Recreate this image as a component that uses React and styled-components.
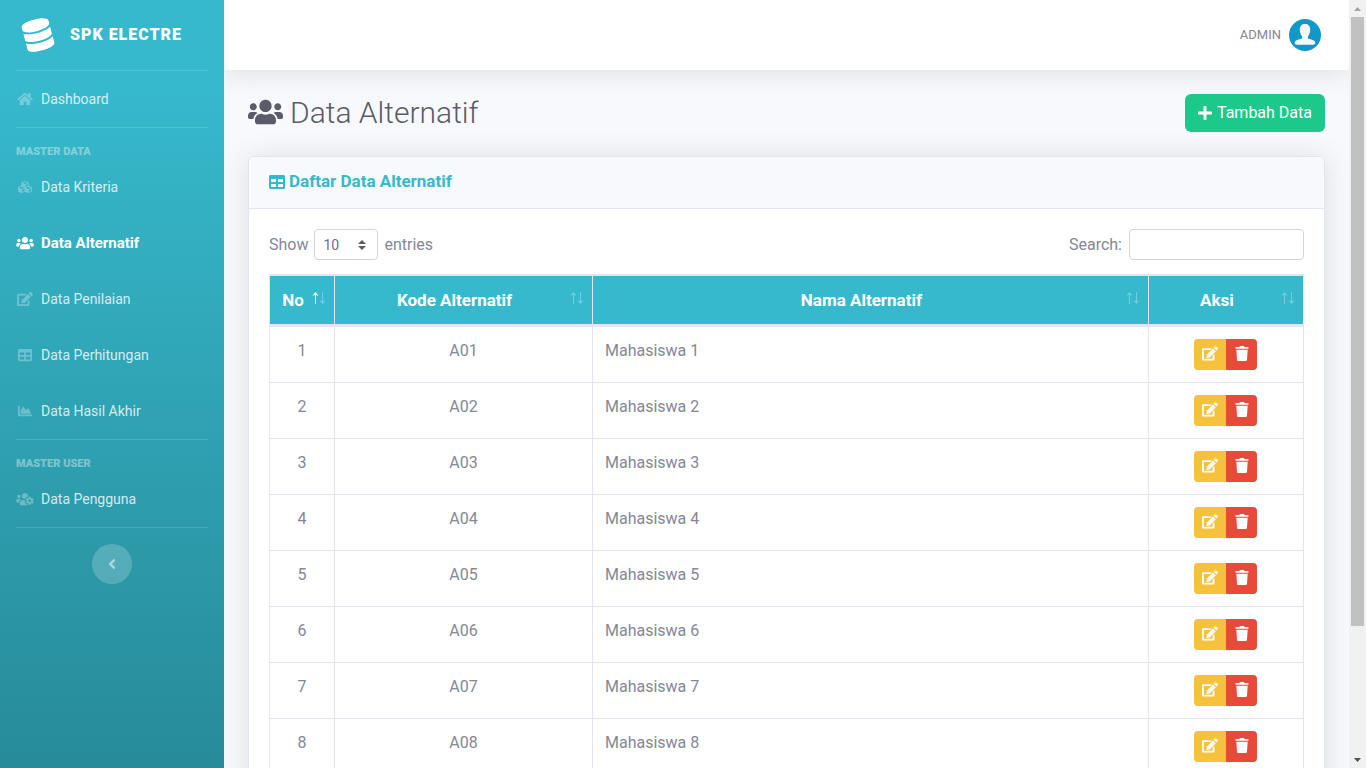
import React from "react";
import styled, { createGlobalStyle, css } from "styled-components";
import {
  FaHome,
  FaCubes,
  FaUsers,
  FaEdit,
  FaTable,
  FaChartArea,
  FaUsersCog,
  FaDatabase,
  FaPlus,
  FaTrash,
  FaAngleLeft,
} from "react-icons/fa";

const GlobalStyle = createGlobalStyle`
  *, *::before, *::after { box-sizing: border-box; }
  body {
    margin: 0;
    background: #f8f9fc;
    color: #858796;
    font-family: Roboto, "Liberation Sans", sans-serif;
    font-size: 16px;
    line-height: 24px;
  }
  button, input, select { font: inherit; }
  h1, h2, ul { margin: 0; padding: 0; }
  svg { display: block; flex: none; }
`;

const Window = styled.div`
  display: flex;
  height: 100vh;
`;

const Scroller = styled.div`
  flex: 1;
  min-width: 0;
  overflow-y: auto;
  scrollbar-width: none;
`;

const Page = styled.div`
  display: flex;
  min-height: 100%;
`;

/* Sidebar */

const Sidebar = styled.nav`
  position: relative;
  z-index: 1;
  flex: none;
  width: 224px;
  background: linear-gradient(180deg, #36b9cc 10%, #258391 100%);
  color: #fff;
`;

const Brand = styled.a`
  display: flex;
  align-items: center;
  gap: 18px;
  height: 70px;
  padding: 0 24px;
  color: #fff;
  font-size: 16px;
  font-weight: 900;
  letter-spacing: 1px;
  text-decoration: none;
  text-transform: uppercase;

  svg {
    width: 28px;
    height: 32px;
    transform: rotate(-15deg);
  }
`;

const Divider = styled.hr`
  height: 1px;
  margin: 0 16px ${(p) => (p.$spaced ? "16px" : "0")};
  border: 0;
  background: rgba(255, 255, 255, 0.15);
`;

const GroupTitle = styled.div`
  padding: 0 16px;
  color: rgba(255, 255, 255, 0.4);
  font-size: 11px;
  font-weight: 900;
  line-height: 15px;
  text-transform: uppercase;
`;

const NavList = styled.ul`
  list-style: none;
`;

const NavLink = styled.a`
  display: flex;
  align-items: center;
  gap: 7px;
  height: 56px;
  padding: 0 16px;
  color: ${(p) => (p.$active ? "#fff" : "rgba(255, 255, 255, 0.8)")};
  font-size: ${(p) => (p.$active ? "15px" : "14px")};
  font-weight: ${(p) => (p.$active ? 700 : 400)};
  text-decoration: none;

  svg {
    width: 18px;
    height: 14px;
    color: ${(p) => (p.$active ? "#fff" : "rgba(255, 255, 255, 0.3)")};
  }
`;

const Collapse = styled.button`
  display: grid;
  place-items: center;
  width: 40px;
  height: 40px;
  margin: 0 auto;
  padding: 0;
  border: 0;
  border-radius: 50%;
  background: rgba(255, 255, 255, 0.2);
  color: rgba(255, 255, 255, 0.5);
  cursor: pointer;
`;

/* Main column */

const Content = styled.div`
  flex: 1;
  min-width: 0;
`;

const Topbar = styled.header`
  display: flex;
  align-items: center;
  justify-content: flex-end;
  height: 70px;
  padding: 0 28px;
  background: #fff;
  box-shadow: 0 2px 28px 0 rgba(58, 59, 69, 0.15);
`;

const UserLink = styled.a`
  display: flex;
  align-items: center;
  gap: 8px;
  color: #858796;
  font-size: 13px;
  text-decoration: none;
  text-transform: uppercase;
`;

const Main = styled.main`
  padding: 24px 24px 80px;
`;

const TitleRow = styled.div`
  display: flex;
  align-items: center;
  justify-content: space-between;
  margin-bottom: 24px;
`;

const PageTitle = styled.h1`
  display: flex;
  align-items: center;
  gap: 7px;
  color: #5a5c69;
  font-size: 30px;
  font-weight: 300;
  line-height: 34px;

  svg {
    width: 35px;
    height: 28px;
    margin-bottom: 2px;
  }
`;

const AddButton = styled.button`
  display: flex;
  align-items: center;
  gap: 5px;
  height: 38px;
  padding: 0 13px;
  border: 0;
  border-radius: 6px;
  background: #1cc88a;
  color: #fff;
  cursor: pointer;

  svg {
    width: 14px;
    height: 16px;
  }
`;

const Card = styled.section`
  border: 1px solid #e3e6f0;
  border-radius: 6px;
  background: #fff;
  box-shadow: 0 2px 28px 0 rgba(58, 59, 69, 0.15);
`;

const CardHeader = styled.header`
  padding: 15px 20px 17px;
  border-bottom: 1px solid #e3e6f0;
  border-radius: 5px 5px 0 0;
  background: #f8f9fc;
`;

const CardTitle = styled.h2`
  display: flex;
  align-items: center;
  gap: 4px;
  color: #36b9cc;
  font-size: 17px;
  font-weight: 700;
  line-height: 19px;

  svg {
    width: 16px;
    height: 16px;
  }
`;

const CardBody = styled.div`
  padding: 20px;
`;

const Controls = styled.div`
  display: flex;
  justify-content: space-between;
  margin-bottom: 14px;
`;

const ControlLabel = styled.label`
  display: flex;
  align-items: center;
  gap: ${(p) => p.$gap};
`;

const field = css`
  height: 31px;
  border: 1px solid #d1d3e2;
  border-radius: 4px;
  background: #fff;
  color: #6e707e;
  font-size: 14px;
`;

const SelectBox = styled.span`
  position: relative;

  svg {
    position: absolute;
    top: 11px;
    right: 12px;
    pointer-events: none;
  }
`;

const LengthSelect = styled.select`
  ${field}
  display: block;
  width: 64px;
  padding: 0 8px;
  appearance: none;
`;

const SearchInput = styled.input`
  ${field}
  width: 175px;
  padding: 4px 8px;
`;

/* Table */

const DataTable = styled.table`
  width: 100%;
  border: 1px solid #e3e6f0;
  border-right: 0;
  border-collapse: separate;
  border-spacing: 0;
  table-layout: fixed;
`;

const Column = styled.col`
  width: ${(p) => p.$width};
`;

const HeadCell = styled.th`
  padding: 0;
  border: solid #e3e6f0;
  border-width: 1px 1px 2px 0;
  background: #36b9cc;
  color: #fff;
`;

const SortButton = styled.button`
  display: flex;
  align-items: center;
  width: 100%;
  height: 48px;
  padding: 0 8px 0 12px;
  border: 0;
  background: none;
  color: inherit;
  font-size: 17px;
  font-weight: 700;
  cursor: pointer;

  span {
    flex: 1;
    text-align: center;
  }

  svg {
    margin: 0 0 4px 8px;
  }
`;

const Cell = styled.td`
  height: 56px;
  padding: 12px;
  border: solid #e3e6f0;
  border-width: 1px 1px 0 0;
  text-align: ${(p) => p.$align || "center"};
  vertical-align: top;
`;

const Actions = styled.div`
  display: flex;
  justify-content: center;
`;

const tones = {
  edit: css`
    width: 32px;
    border-radius: 4px 0 0 4px;
    background: #f6c23e;
  `,
  remove: css`
    width: 31px;
    border-radius: 0 4px 4px 0;
    background: #e74a3b;
  `,
};

const ActionButton = styled.button`
  display: grid;
  place-items: center;
  height: 31px;
  padding: 0 0 2px;
  border: 0;
  color: #fff;
  cursor: pointer;
  ${(p) => tones[p.$tone]}

  svg {
    width: 16px;
    height: 15px;
  }
`;

/* Scroll bar beside the page */

const ScrollBar = styled.div`
  display: flex;
  flex: none;
  flex-direction: column;
  width: 17px;
  background: #f1f1f1;
`;

const ScrollArrow = styled.div`
  display: grid;
  place-items: center;
  height: 17px;
  color: ${(p) => (p.$dim ? "#a3a3a3" : "#505050")};
`;

const ScrollTrack = styled.div`
  flex: 1;
  padding: 0 2px;
`;

const ScrollThumb = styled.div`
  height: 83%;
  background: #c1c1c1;
`;

function Avatar() {
  return (
    <svg width="32" height="32" viewBox="0 0 32 32" aria-hidden="true">
      <circle cx="16" cy="16" r="16" fill="#1098c9" />
      <path
        fill="#f7f7f9"
        d="M16 5c3.200 0 5.200 2 5.200 5.400 0 3.200-1 5.400-2.200 6.800-.5 1.800 0 2.500 1.500 2.900 2.600.8 5.800 1.300 5.800 3.700 0 1.300-.8 1.900-2.200 1.900H7.900c-1.400 0-2.200-.6-2.200-1.900 0-2.400 3.200-2.900 5.800-3.700 1.500-.4 2-1.100 1.500-2.900-1.200-1.400-2.200-3.600-2.200-6.800C10.800 7 12.800 5 16 5z"
      />
    </svg>
  );
}

function SortArrows({ ascending }) {
  return (
    <svg width="14" height="12" viewBox="0 0 14 12" fill="none" stroke="#fff" aria-hidden="true">
      <g opacity={ascending ? 1 : 0.3}>
        <path d="M3.500 12V1" />
        <path fill="#fff" stroke="none" d="M3.500 0l3 3.500h-1.300L3.500 2.200 1.800 3.500H.5z" />
      </g>
      <g opacity="0.3">
        <path d="M10.500 0v11" />
        <path fill="#fff" stroke="none" d="M10.500 12l3-3.500h-1.300l-1.700 1.300-1.700-1.300H7.500z" />
      </g>
    </svg>
  );
}

function Caret({ up }) {
  return (
    <svg width="7" height="4" viewBox="0 0 7 4" fill="currentColor" aria-hidden="true">
      <path d={up ? "M0 4L3.500 0 7 4z" : "M0 0h7L3.500 4z"} />
    </svg>
  );
}

const masterData = [
  { label: "Data Kriteria", Icon: FaCubes },
  { label: "Data Alternatif", Icon: FaUsers, active: true },
  { label: "Data Penilaian", Icon: FaEdit },
  { label: "Data Perhitungan", Icon: FaTable },
  { label: "Data Hasil Akhir", Icon: FaChartArea },
];

const columns = ["No", "Kode Alternatif", "Nama Alternatif", "Aksi"];

const rows = [1, 2, 3, 4, 5, 6, 7, 8].map((no) => ({
  no,
  code: `A0${no}`,
  name: `Mahasiswa ${no}`,
}));

function NavItems({ items }) {
  return (
    <NavList>
      {items.map(({ label, Icon, active }) => (
        <li key={label}>
          <NavLink href="#" $active={active} aria-current={active ? "page" : undefined}>
            <Icon />
            {label}
          </NavLink>
        </li>
      ))}
    </NavList>
  );
}

export default function App() {
  return (
    <Window>
      <GlobalStyle />
      <Scroller>
        <Page>
          <Sidebar>
            <Brand href="#">
              <FaDatabase />
              SPK Electre
            </Brand>
            <Divider />
            <NavItems items={[{ label: "Dashboard", Icon: FaHome }]} />
            <Divider $spaced />
            <GroupTitle>Master Data</GroupTitle>
            <NavItems items={masterData} />
            <Divider $spaced />
            <GroupTitle>Master User</GroupTitle>
            <NavItems items={[{ label: "Data Pengguna", Icon: FaUsersCog }]} />
            <Divider $spaced />
            <Collapse type="button" aria-label="Toggle sidebar">
              <FaAngleLeft />
            </Collapse>
          </Sidebar>

          <Content>
            <Topbar>
              <UserLink href="#">
                Admin
                <Avatar />
              </UserLink>
            </Topbar>

            <Main>
              <TitleRow>
                <PageTitle>
                  <FaUsers />
                  Data Alternatif
                </PageTitle>
                <AddButton type="button">
                  <FaPlus />
                  Tambah Data
                </AddButton>
              </TitleRow>

              <Card>
                <CardHeader>
                  <CardTitle>
                    <FaTable />
                    Daftar Data Alternatif
                  </CardTitle>
                </CardHeader>
                <CardBody>
                  <Controls>
                    <ControlLabel $gap="6px">
                      Show
                      <SelectBox>
                        <LengthSelect defaultValue="10">
                          <option>10</option>
                          <option>25</option>
                          <option>50</option>
                          <option>100</option>
                        </LengthSelect>
                        <svg width="8" height="10" viewBox="0 0 8 10" fill="#5a5c69" aria-hidden="true">
                          <path d="M0 4L4 0l4 4zM0 6h8L4 10z" />
                        </svg>
                      </SelectBox>
                      entries
                    </ControlLabel>
                    <ControlLabel $gap="7px">
                      Search:
                      <SearchInput type="search" />
                    </ControlLabel>
                  </Controls>

                  <DataTable>
                    <colgroup>
                      <Column $width="65px" />
                      <Column $width="258px" />
                      <Column />
                      <Column $width="15%" />
                    </colgroup>
                    <thead>
                      <tr>
                        {columns.map((name, i) => (
                          <HeadCell key={name} scope="col" aria-sort={i === 0 ? "ascending" : undefined}>
                            <SortButton type="button">
                              <span>{name}</span>
                              <SortArrows ascending={i === 0} />
                            </SortButton>
                          </HeadCell>
                        ))}
                      </tr>
                    </thead>
                    <tbody>
                      {rows.map((row) => (
                        <tr key={row.no}>
                          <Cell>{row.no}</Cell>
                          <Cell>{row.code}</Cell>
                          <Cell $align="left">{row.name}</Cell>
                          <Cell>
                            <Actions>
                              <ActionButton type="button" $tone="edit" aria-label={`Edit ${row.name}`}>
                                <FaEdit />
                              </ActionButton>
                              <ActionButton type="button" $tone="remove" aria-label={`Hapus ${row.name}`}>
                                <FaTrash />
                              </ActionButton>
                            </Actions>
                          </Cell>
                        </tr>
                      ))}
                    </tbody>
                  </DataTable>
                </CardBody>
              </Card>
            </Main>
          </Content>
        </Page>
      </Scroller>

      <ScrollBar aria-hidden="true">
        <ScrollArrow $dim>
          <Caret up />
        </ScrollArrow>
        <ScrollTrack>
          <ScrollThumb />
        </ScrollTrack>
        <ScrollArrow>
          <Caret />
        </ScrollArrow>
      </ScrollBar>
    </Window>
  );
}
